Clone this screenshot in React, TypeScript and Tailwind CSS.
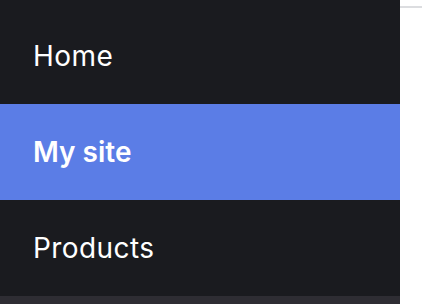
export default function App() {
  const items = [
    { label: "Home", active: false },
    { label: "My site", active: true },
    { label: "Products", active: false },
  ];
  return (
    <div className="flex h-[304px] w-[422px] overflow-hidden bg-white" style={{ fontFamily: "Inter, 'Noto Sans', sans-serif" }}>
      <nav className="flex h-full w-[400px] shrink-0 flex-col bg-[#1a1b1f] pt-2">
        {items.map((it) => (
          <a
            key={it.label}
            href="#"
            className={
              it.active
                ? "flex h-[96px] items-center bg-[#5b7de6] pl-[33px] text-[28px] font-semibold tracking-[0em] text-white"
                : "flex h-[96px] items-center pl-[33px] text-[28px] font-normal tracking-[0.015em] text-white"
            }
          >
            {it.label}
          </a>
        ))}
        <div className="flex-1 bg-[#2e2d33]" />
      </nav>
      <div className="flex-1 pt-[6px]">
        <div className="h-[2px] bg-[#dcdde0]" />
      </div>
    </div>
  );
}
